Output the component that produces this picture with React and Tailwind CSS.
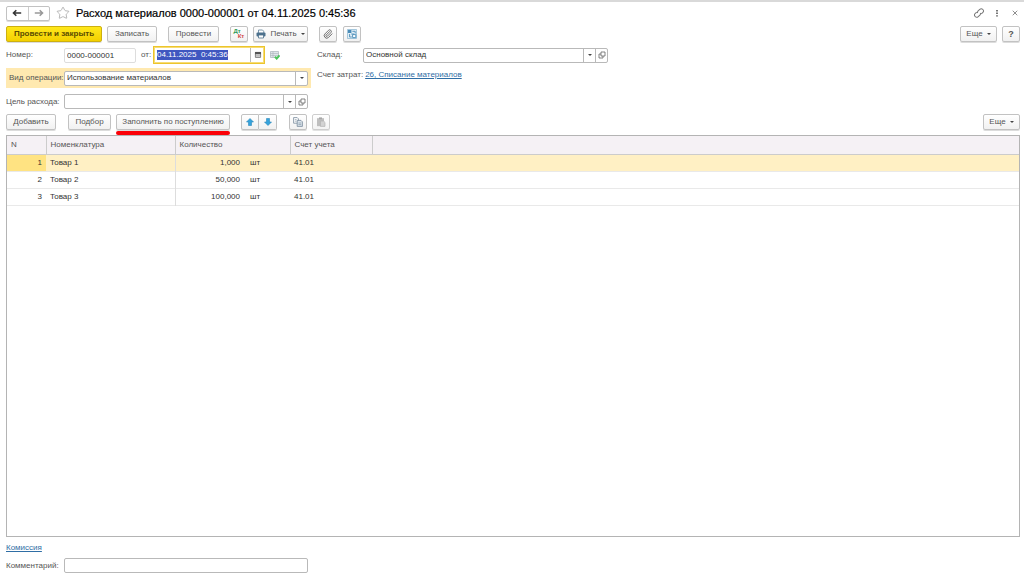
import { useEffect, useRef } from 'react'
import { Star, X, Paperclip } from 'lucide-react'
import { clsx } from 'clsx'

const rows = [
  { n: 1, name: 'Товар 1', qty: '1,000', unit: 'шт', account: '41.01' },
  { n: 2, name: 'Товар 2', qty: '50,000', unit: 'шт', account: '41.01' },
  { n: 3, name: 'Товар 3', qty: '100,000', unit: 'шт', account: '41.01' },
]

function Button({ className, children, ...props }) {
  return (
    <button
      type="button"
      className={clsx(
        'flex h-4 shrink-0 items-center justify-center rounded-xs border whitespace-nowrap shadow-[0_1px_0_#dcdcdc]',
        className,
      )}
      {...props}
    >
      {children}
    </button>
  )
}

const plain = 'border-[#c2c2c2] bg-linear-to-b from-white to-[#f1f1f1] text-[#555]'

function Caret() {
  return (
    <svg viewBox="0 0 4 2" className="h-0.5 w-1 shrink-0" fill="#444" aria-hidden="true">
      <path d="M0 0h4L2 2z" />
    </svg>
  )
}

function OpenIcon() {
  return (
    <svg viewBox="0 0 8 8" className="size-2" fill="none" stroke="#666" strokeWidth="0.8" aria-hidden="true">
      <path d="M3 1h4v4H3z" />
      <path d="M3 3H1v4h4V5" />
    </svg>
  )
}

function Field({ id, value, className, drop, open }) {
  return (
    <div className={clsx('flex h-[15px] overflow-hidden rounded-xs border border-[#b9b9b9] bg-white', className)}>
      <input id={id} defaultValue={value} className="min-w-0 flex-1 px-0.5 text-[#333] outline-none" />
      {drop && (
        <button type="button" aria-label="Выбрать" className="flex w-3 items-center justify-center border-l border-[#b9b9b9]">
          <Caret />
        </button>
      )}
      {open && (
        <button type="button" aria-label="Открыть" className="flex w-3 items-center justify-center border-l border-[#b9b9b9]">
          <OpenIcon />
        </button>
      )}
    </div>
  )
}

function Arrow({ className }) {
  return (
    <svg viewBox="0 0 10 8" className={clsx('h-2 w-2.5', className)} fill="none" stroke="currentColor" strokeWidth="1.6" aria-hidden="true">
      <path d="M9.2 4H1.5M4.3 1.2L1.5 4l2.8 2.8" />
    </svg>
  )
}

function MoveArrow({ className }) {
  return (
    <svg viewBox="0 0 8 8" className={clsx('size-2', className)} fill="#35a3dc" stroke="#2a86bb" strokeWidth="0.6" aria-hidden="true">
      <path d="M4 .5L7.5 4H5.5v3.5h-3V4H.5z" />
    </svg>
  )
}

function LinkIcon() {
  return (
    <svg viewBox="0 0 12 12" className="size-3" fill="none" stroke="currentColor" strokeWidth="1" aria-hidden="true">
      <g transform="rotate(-42 6 6)">
        <path d="M5 3.8H3a2.2 2.2 0 0 0 0 4.4h2.2a2 2 0 0 0 1.8-1.4" />
        <path d="M7 8.2h2a2.2 2.2 0 0 0 0-4.4H6.8A2 2 0 0 0 5 5.2" />
      </g>
    </svg>
  )
}

function DotsIcon() {
  return (
    <svg viewBox="0 0 4 8" className="h-2 w-1" fill="currentColor" aria-hidden="true">
      <path d="M1 1h2v1.4H1zM1 3.6h2V5H1zM1 6.2h2v1.4H1z" />
    </svg>
  )
}

function PrinterIcon() {
  return (
    <svg viewBox="0 0 10 10" className="size-2.5" aria-hidden="true">
      <path d="M2.5 4V1h4l1.2 1.2V4" fill="#fff" stroke="#5a7d98" strokeWidth="0.8" />
      <rect x="0.5" y="3.6" width="9" height="4" rx="1" fill="#4c718d" />
      <path d="M2.5 6h5v3h-5z" fill="#fff" stroke="#4c718d" strokeWidth="0.8" />
    </svg>
  )
}

function StructureIcon() {
  return (
    <svg viewBox="0 0 10 10" className="size-2.5" fill="none" aria-hidden="true">
      <path d="M.5 .5h9v9h-9z" fill="#e3eff6" stroke="#84b3d0" strokeWidth="0.7" />
      <path d="M1 1h3.4v3H1z" fill="#4a8cb8" />
      <path d="M5.6 5.6h3.2v3H5.6z" fill="#fff" stroke="#4a8cb8" strokeWidth="0.9" />
      <path d="M5.4 2.3h2.8v2.2M4.2 5h3M2.6 5v3h2.2" stroke="#4a8cb8" strokeWidth="0.9" />
    </svg>
  )
}

function PostedIcon() {
  return (
    <svg viewBox="0 0 10 10" className="size-2.5" fill="none" aria-hidden="true">
      <path d="M.5 1.5h8v6h-8z" fill="#e0e6ea" stroke="#a9b3ba" strokeWidth="0.7" />
      <path d="M.5 3.5h8M.5 5.5h8M3 1.5v6" stroke="#a9b3ba" strokeWidth="0.6" />
      <path d="M5 6.8l1.7 1.8L9.5 5.4" stroke="#4cc45c" strokeWidth="2" />
    </svg>
  )
}

function CalendarIcon() {
  return (
    <svg viewBox="0 0 8 8" className="size-2" aria-hidden="true">
      <path d="M1.4 1.4h5.2v5H1.4z" fill="#ddd" stroke="#666" strokeWidth="0.8" />
      <path d="M1 1h6v2.2H1z" fill="#555" />
      <path d="M2 4.8h4" stroke="#999" strokeWidth="0.7" />
    </svg>
  )
}

function CopyIcon() {
  return (
    <svg viewBox="0 0 10 10" className="size-2.5" fill="#fff" stroke="#76899a" strokeWidth="0.8" aria-hidden="true">
      <path d="M.6 .6h3.6l1.2 1.2v4.4H.6z" />
      <path d="M4.2 3.4h3.8l1.4 1.4v4.6H4.2z" fill="#dbe4ec" />
      <path d="M5.4 6h2.8M5.4 7.6h2.8M1.8 2.6h1.8M1.8 4.2h1.8" strokeWidth="0.6" />
    </svg>
  )
}

function PasteIcon() {
  return (
    <svg viewBox="0 0 10 10" className="size-2.5" aria-hidden="true">
      <path d="M1 1.2h7v8H1z" fill="#b0b0b0" />
      <path d="M3 .4h3v1.8H3z" fill="#929292" />
      <path d="M4.4 4h3.2l1.4 1.4v4H4.4z" fill="#c9c9c9" stroke="#999" strokeWidth="0.6" />
    </svg>
  )
}

function Header() {
  return (
    <header className="flex h-[22px] items-center pr-[5px] pl-1.5">
      <div className="flex h-[15px] w-11 shrink-0 rounded-xs border border-[#c2c2c2] shadow-[0_1px_0_#dcdcdc]">
        <button type="button" aria-label="Назад" className="flex flex-1 items-center justify-center text-[#333]">
          <Arrow />
        </button>
        <button type="button" aria-label="Вперед" className="flex flex-1 items-center justify-center border-l border-[#ccc] text-[#999]">
          <Arrow className="rotate-180" />
        </button>
      </div>
      <button type="button" aria-label="Избранное" className="ml-1.5 text-[#999]">
        <Star className="size-3.5" strokeWidth={1.2} />
      </button>
      <h1 className="ml-1.5 text-[11px] whitespace-nowrap text-black [-webkit-text-stroke:0.2px]">
        Расход материалов 0000-000001 от 04.11.2025 0:45:36
      </h1>
      <div className="ml-auto flex items-center gap-2.5 text-[#777]">
        <button type="button" aria-label="Ссылка"><LinkIcon /></button>
        <button type="button" aria-label="Меню"><DotsIcon /></button>
        <button type="button" aria-label="Закрыть" className="ml-0.5"><X className="size-2" strokeWidth={2.5} /></button>
      </div>
    </header>
  )
}

function CommandBar() {
  return (
    <div className="mt-0.5 flex items-center pr-1 pl-1.5">
      <Button className="w-24 border-[#cdb010] bg-linear-to-b from-[#ffe81a] to-[#f3d000] font-bold text-[#5a4c00]">
        Провести и закрыть
      </Button>
      <Button className={clsx(plain, 'ml-[5px] w-[50px]')}>Записать</Button>
      <Button className={clsx(plain, 'ml-[11px] w-[51px]')}>Провести</Button>
      <Button className={clsx(plain, 'ml-[11px] w-[18px]')} aria-label="Дт Кт">
        <span className="text-[6px] leading-[5px] font-bold">
          <span className="block pr-1 text-[#2f9a55]">Дт</span>
          <span className="block pl-1 text-[#d04848]">Кт</span>
        </span>
      </Button>
      <Button className={clsx(plain, 'ml-[5px] w-[55px] gap-1')}>
        <PrinterIcon />
        Печать
        <Caret />
      </Button>
      <Button className={clsx(plain, 'ml-[11px] w-[18px]')} aria-label="Файлы">
        <Paperclip className="size-2.5" />
      </Button>
      <Button className={clsx(plain, 'ml-1.5 w-[18px]')} aria-label="Структура">
        <StructureIcon />
      </Button>
      <Button className={clsx(plain, 'ml-auto w-[37px] gap-1')}>
        Еще
        <Caret />
      </Button>
      <Button className={clsx(plain, 'ml-[5px] w-[18px] text-[9px] font-bold')}>?</Button>
    </div>
  )
}

function DateField() {
  const ref = useRef(null)

  useEffect(() => {
    ref.current.focus()
    ref.current.select()
  }, [])

  return (
    <div className="flex h-[18px] w-28 border border-[#ecc52c] bg-white ring-1 ring-[#f7dc74] ring-inset">
      <input
        id="date"
        ref={ref}
        defaultValue="04.11.2025  0:45:36"
        className="min-w-0 flex-1 pl-[3px] outline-none selection:bg-[#3f57c0] selection:text-white"
      />
      <button type="button" aria-label="Календарь" className="my-px flex w-3.5 items-center justify-center border-l border-[#b9b9b9]">
        <CalendarIcon />
      </button>
    </div>
  )
}

function DocumentForm() {
  return (
    <div className="mt-1 flex items-start gap-1.5 pl-1.5">
      <div className="w-[305px] shrink-0">
        <div className="flex h-[18px] items-center">
          <label htmlFor="number" className="w-[58px]">Номер:</label>
          <input
            id="number"
            defaultValue="0000-000001"
            className="h-[15px] w-[72px] rounded-xs border border-[#ddd] px-0.5 text-[#333] outline-none"
          />
          <label htmlFor="date" className="ml-[5px] w-3">от:</label>
          <DateField />
          <span className="ml-[5px]"><PostedIcon /></span>
        </div>
        <div className="mt-1 flex h-5 items-center bg-[#ffe9b0] pr-[3px]">
          <label htmlFor="operation" className="w-[58px] pl-[3px] whitespace-nowrap">Вид операции:</label>
          <Field id="operation" value="Использование материалов" className="flex-1" drop />
        </div>
        <div className="mt-1.5 flex items-center pr-[3px]">
          <label htmlFor="purpose" className="w-[58px] whitespace-nowrap">Цель расхода:</label>
          <Field id="purpose" value="" className="flex-1" drop open />
        </div>
      </div>
      <div>
        <div className="flex h-[18px] items-center">
          <label htmlFor="store" className="w-[46px]">Склад:</label>
          <Field id="store" value="Основной склад" className="w-[245px]" drop open />
        </div>
        <div className="mt-1.5 flex items-center gap-0.5">
          <span>Счет затрат:</span>
          <a href="#account" className="text-[#2f6ea5] underline">26, Списание материалов</a>
        </div>
      </div>
    </div>
  )
}

function TableBar() {
  return (
    <div className="mt-[5px] flex items-center pr-1 pl-1.5">
      <Button className={clsx(plain, 'w-[50px]')}>Добавить</Button>
      <Button className={clsx(plain, 'ml-3 w-[43px]')}>Подбор</Button>
      <div className="relative ml-[5px]">
        <Button className={clsx(plain, 'w-[114px]')}>Заполнить по поступлению</Button>
        <div className="absolute inset-x-0 top-[17px] h-1 rounded-full bg-[#fb0007]" />
      </div>
      <div className="ml-[11px] flex">
        <Button className={clsx(plain, 'w-[18px] rounded-r-none')} aria-label="Вверх"><MoveArrow /></Button>
        <Button className={clsx(plain, 'w-[18px] rounded-l-none border-l-0')} aria-label="Вниз"><MoveArrow className="rotate-180" /></Button>
      </div>
      <Button className={clsx(plain, 'ml-3 w-[18px]')} aria-label="Копировать"><CopyIcon /></Button>
      <Button className={clsx(plain, 'ml-[5px] w-[18px] opacity-80')} aria-label="Вставить"><PasteIcon /></Button>
      <Button className={clsx(plain, 'ml-auto w-[37px] gap-1')}>
        Еще
        <Caret />
      </Button>
    </div>
  )
}

function ItemsTable() {
  return (
    <div className="mt-[5px] mr-1 ml-1.5 flex-1 border border-[#b4b4b4]">
      <table className="w-full table-fixed border-collapse">
        <colgroup>
          <col className="w-[39px]" />
          <col className="w-[129px]" />
          <col className="w-[69px]" />
          <col className="w-[46px]" />
          <col className="w-[82px]" />
          <col />
        </colgroup>
        <thead>
          <tr className="h-[18px] border-b border-[#ccc] bg-[#f5f1f5] text-left">
            <th className="border-r border-[#ccc] px-1 font-normal">N</th>
            <th className="border-r border-[#ccc] px-1 font-normal">Номенклатура</th>
            <th colSpan={2} className="border-r border-[#ccc] px-1 font-normal">Количество</th>
            <th className="border-r border-[#ccc] px-1 font-normal">Счет учета</th>
            <th />
          </tr>
        </thead>
        <tbody className="text-[#333]">
          {rows.map((row) => (
            <tr key={row.n} className={clsx('h-[17px] border-b border-[#e9e9e9]', row.n === 1 && 'bg-[#fff0c4]')}>
              <td className={clsx('px-1 text-right', row.n === 1 && 'bg-[#ffe382]')}>{row.n}</td>
              <td className="border-r border-[#ddd] px-1">{row.name}</td>
              <td className="px-1 text-right">{row.qty}</td>
              <td className="px-1.5">{row.unit}</td>
              <td className="px-1">{row.account}</td>
              <td />
            </tr>
          ))}
        </tbody>
      </table>
    </div>
  )
}

export default function App() {
  return (
    <div className="flex min-h-screen flex-col border-t-2 border-[#d9d9d9] bg-white font-['Liberation_Sans',Arial,sans-serif] text-[8px] leading-[10px] text-[#555]">
      <Header />
      <CommandBar />
      <DocumentForm />
      <TableBar />
      <ItemsTable />
      <footer className="px-1.5 pt-1.5 pb-[5px]">
        <a href="#commission" className="block w-fit text-[#2f6ea5] underline">Комиссия</a>
        <div className="mt-[5px] flex items-center">
          <label htmlFor="comment" className="w-[58px]">Комментарий:</label>
          <Field id="comment" value="" className="w-[244px]" />
        </div>
      </footer>
    </div>
  )
}
